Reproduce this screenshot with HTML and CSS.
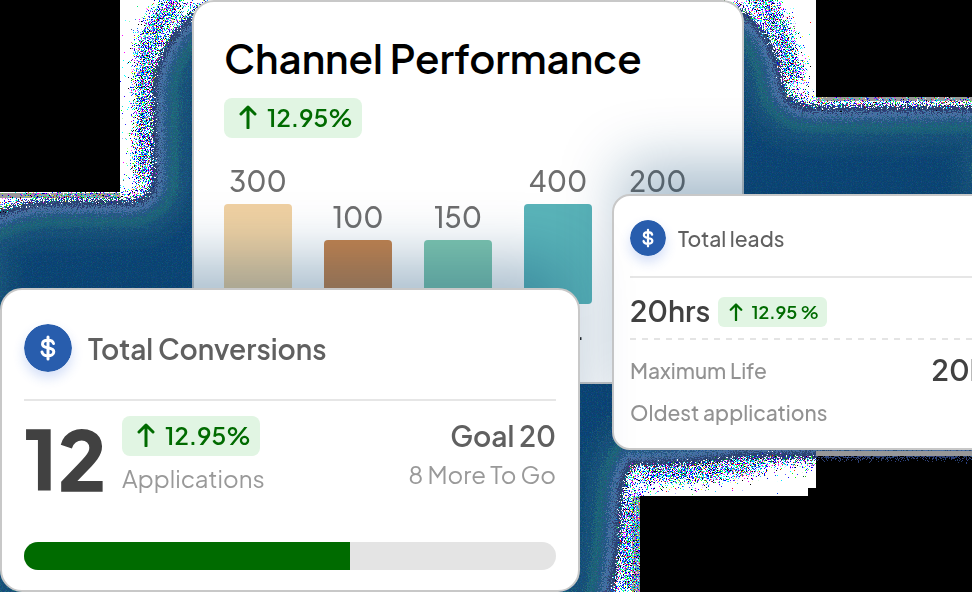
FILE: index.html
```html
<!DOCTYPE html>
<html lang="en">
<head>
<meta charset="utf-8">
<title>Channel Performance</title>
<link rel="stylesheet" href="styles.css">
</head>
<body>
<svg class="backdrop" viewBox="0 0 972 592" preserveAspectRatio="none" aria-hidden="true">
  <defs>
    <filter id="speckle" filterUnits="userSpaceOnUse" x="-40" y="-40" width="1052" height="672" color-interpolation-filters="sRGB">
      <feGaussianBlur in="SourceAlpha" stdDeviation="9" result="soft"/>
      <feTurbulence type="fractalNoise" baseFrequency="0.93" numOctaves="2" seed="4" result="n"/>
      <feColorMatrix in="n" type="matrix" values="0 0 0 0 0  0 0 0 0 0  0 0 0 0 0  1 0 0 0 0" result="na"/>
      <feComposite in="soft" in2="na" operator="arithmetic" k1="0" k2="26" k3="60" k4="-48" result="mask"/>
      <feTurbulence type="fractalNoise" baseFrequency="0.87" numOctaves="1" seed="11"/>
      <feColorMatrix type="matrix" values="14 0 0 0 -7.2  0 14 0 0 -6.5  0 0 14 0 -5.6  0 0 0 0 1"/>
      <feComposite in2="mask" operator="in"/>
    </filter>
    <filter id="grain" filterUnits="userSpaceOnUse" x="0" y="0" width="972" height="592" color-interpolation-filters="sRGB">
      <feTurbulence type="fractalNoise" baseFrequency="0.8" numOctaves="2" seed="7" result="n"/>
      <feDisplacementMap in="SourceGraphic" in2="n" scale="20" xChannelSelector="R" yChannelSelector="G" result="d"/>
      <feColorMatrix in="n" type="matrix" values="1 0 0 0 -.5  0 1 0 0 -.5  0 0 1 0 -.46  0 0 0 0 1"/>
      <feComposite in2="d" operator="in" result="t"/>
      <feComposite in="d" in2="t" operator="arithmetic" k1="0" k2="1" k3=".35" k4="0"/>
    </filter>
    <path id="halo" d="M-30 230Q0 201 60 200H130Q151 198 152 180V90Q155 40 200 8H738Q776 30 784 86Q788 104 815 106H1000V458H740Q690 466 632 466Q622 480 621 520Q620 560 608 620H-30Z"/>
    <clipPath id="inside"><use href="#halo"/></clipPath>
    <clipPath id="lit"><path d="M120 0H816V97H972V110H816V488H808V496H640V592H580V400H120V220H0V192H120Z"/></clipPath>
  </defs>
  <rect width="972" height="592"/>
  <path fill="#fff" d="M120 0H816V97H972V110H816V488H808V496H640V592H580V400H120V210H0V192H120Z"/>
  <path fill="#000" opacity=".4" d="M632 496H640V592H632ZM0 193H120V198H0ZM816 97H972V101H816Z"/>
  <g clip-path="url(#lit)">
    <use href="#halo" fill="none" stroke="#000" stroke-width="18" filter="url(#speckle)"/>
    <path fill="none" stroke="#000" stroke-width="28" filter="url(#speckle)" d="M146 190V70Q148 20 185 -5M750 -10Q790 25 792 92M635 471Q710 476 775 455M630 490V600"/>
  </g>
  <g filter="url(#grain)">
    <g clip-path="url(#inside)">
      <use href="#halo" fill="#0a426f"/>
      <use href="#halo" fill="none" stroke="#0f486f" stroke-width="100"/>
      <use href="#halo" fill="none" stroke="#154e74" stroke-width="76"/>
      <use href="#halo" fill="none" stroke="#1b6074" stroke-width="54"/>
      <use href="#halo" fill="none" stroke="#235680" stroke-width="36"/>
      <use href="#halo" fill="none" stroke="#426d9c" stroke-width="24"/>
      <use href="#halo" fill="none" stroke="#29406d" stroke-width="12"/>
    </g>
  </g>
  <path fill="#999" d="M816 451H972V456H816Z"/>
</svg>

<main class="stage">
  <section class="card performance">
    <h1 class="title">Channel Performance</h1>
    <p class="badge">
      <svg class="arrow" viewBox="0 0 18 24" aria-hidden="true"><path d="M9 23V2M2 9L9 2L16 9"/></svg>12.95%
    </p>
    <div class="chart">
      <div class="column"><span>300</span><i class="bar tall sand"></i></div>
      <div class="column"><span>100</span><i class="bar copper"></i></div>
      <div class="column"><span>150</span><i class="bar mint"></i></div>
      <div class="column"><span>400</span><i class="bar tall teal"></i></div>
      <div class="column"><span>200</span><i class="bar tall"></i></div>
    </div>
    <p class="axis">.</p>
  </section>

  <section class="card leads">
    <header class="head">
      <svg class="coin" viewBox="0 0 48 48" aria-hidden="true"><circle cx="24" cy="24" r="24"/><path d="M24 13V35M29.500 19.500C29 17.500 27 16.300 24 16.300C20.800 16.300 18.500 17.700 18.500 20.200C18.500 25.300 29.800 22.300 29.800 27.800C29.800 30.300 27.300 31.800 24 31.800C20.800 31.800 18.500 30.400 18 28"/></svg>
      <h2>Total leads</h2>
    </header>
    <div class="hours">
      <strong>20hrs</strong>
      <p class="badge small">
        <svg class="arrow" viewBox="0 0 18 24" aria-hidden="true"><path d="M9 23V2M2 9L9 2L16 9"/></svg>12.95 %
      </p>
    </div>
    <svg class="dashes" aria-hidden="true"><line x1="0" y1="1" x2="100%" y2="1"/></svg>
    <dl class="facts">
      <div><dt>Maximum Life</dt><dd>20hrs</dd></div>
      <div><dt>Oldest applications</dt></div>
    </dl>
  </section>

  <section class="card conversions">
    <header class="head">
      <svg class="coin" viewBox="0 0 48 48" aria-hidden="true"><circle cx="24" cy="24" r="24"/><path d="M24 13V35M29.500 19.500C29 17.500 27 16.300 24 16.300C20.800 16.300 18.500 17.700 18.500 20.200C18.500 25.300 29.800 22.300 29.800 27.800C29.800 30.300 27.300 31.800 24 31.800C20.800 31.800 18.500 30.400 18 28"/></svg>
      <h2>Total Conversions</h2>
    </header>
    <div class="summary">
      <strong class="count">12</strong>
      <div class="applications">
        <p class="badge">
          <svg class="arrow" viewBox="0 0 18 24" aria-hidden="true"><path d="M9 23V2M2 9L9 2L16 9"/></svg>12.95%
        </p>
        <p class="note">Applications</p>
      </div>
      <div class="goal">
        <p class="target">Goal 20</p>
        <p class="note">8 More To Go</p>
      </div>
    </div>
    <div class="track"><div class="fill"></div></div>
  </section>
</main>
</body>
</html>
```
FILE: styles.css
```css
* { box-sizing: border-box; margin: 0; padding: 0; }

body {
  min-height: 100vh;
  overflow: hidden;
  background: #000;
  color: #414141;
  font-family: "Plus Jakarta Sans", Figtree, Inter, sans-serif;
  font-weight: 500;
}

.backdrop { position: fixed; inset: 0; width: 100%; height: 100%; }

/* The three cards share cells of one grid, so that they overlap. */
.stage {
  position: relative;
  display: grid;
  grid-template-columns: 192px 388px 32px 132px 1fr;
  grid-template-rows: 194px 94px 96px auto;
  align-items: start;
}

.card { background: #fff; border: 2px solid #c8c8c8; border-radius: 22px; }

.performance {
  grid-area: 1 / 2 / 4 / 5;
  align-self: stretch;
  padding: 32px 30px 0;
}

.title { color: #000; font-size: 40px; line-height: 48px; font-weight: 600; white-space: nowrap; }

.badge {
  display: flex;
  align-items: center;
  gap: 10px;
  width: max-content;
  height: 40px;
  padding: 0 9px 2px 15px;
  border-radius: 8px;
  background: #e1f5e3;
  color: #006b00;
  font-size: 24px;
  font-weight: 600;
  line-height: 30px;
  white-space: nowrap;
}
.arrow { width: 18px; height: 24px; fill: none; stroke: #006b00; stroke-width: 3; stroke-linecap: round; stroke-linejoin: round; }
.title + .badge { margin-top: 16px; }

.chart { display: flex; align-items: flex-end; gap: 32px; margin-top: 26px; }
.column { display: flex; flex-direction: column; align-items: center; gap: 6px; width: 68px; }
.column span { color: #6e6e6e; font-size: 28px; line-height: 34px; }
.bar { width: 100%; height: 64px; border-radius: 4px; }
.tall { height: 100px; }
.sand { background: #f0d1a2; }
.copper { background: #c7834c; }
.mint { background: #7fc7b0; }
.teal { background: #5ab4b9; }
.axis { width: 360px; margin-top: 10px; color: #222; font-size: 24px; line-height: 32px; text-align: right; }

.leads {
  grid-area: 2 / 4 / 5 / 6;
  margin-right: -58px;
  padding: 24px 16px 14px;
  border-radius: 18px;
  box-shadow: 0 -40px 60px -10px rgba(10, 66, 112, .34);
}
.conversions {
  grid-area: 3 / 1 / 5 / 3;
  padding: 34px 22px 20px;
  box-shadow: 0 -40px 60px -10px rgba(10, 66, 112, .34);
}

.head { display: flex; align-items: center; gap: 16px; border-bottom: 2px solid #e6e6e6; }
.conversions .head { padding-bottom: 27px; }
.leads .head { gap: 12px; padding-bottom: 20px; }
h2 { padding-top: 2px; color: #606060; font-size: 28px; line-height: 32px; font-weight: 600; }
.leads h2 { font-size: 21px; font-weight: 500; }

.coin { flex: none; width: 48px; height: 48px; border-radius: 50%; fill: #285dad; box-shadow: 0 6px 12px rgba(40, 93, 220, .2); }
.coin path { fill: none; stroke: #fff; stroke-width: 3; stroke-linecap: round; }
.leads .coin { width: 36px; height: 36px; }

.hours { display: flex; align-items: center; gap: 8px; height: 60px; padding-top: 8px; }
.hours strong, dd { padding-bottom: 4px; color: #414141; font-size: 29px; line-height: 36px; font-weight: 600; }
.small { gap: 8px; height: 30px; padding: 0 8px 0 11px; border-radius: 6px; font-size: 18px; }
.small .arrow { width: 14px; height: 18px; }

.dashes { display: block; width: 100%; height: 2px; }
.dashes line { stroke: #e4e4e4; stroke-width: 2; stroke-dasharray: 6 6; }

.facts { padding-top: 10px; }
.facts div { display: flex; justify-content: space-between; align-items: center; height: 42px; }
dt { color: #929292; font-size: 21px; line-height: 28px; }

.summary { display: flex; align-items: flex-start; padding-top: 15px; }
.count { width: 98px; color: #414141; font-size: 82px; line-height: 84px; font-weight: 800; }
.note { color: #999; font-size: 24px; line-height: 32px; font-weight: 400; white-space: nowrap; }
.applications .note { margin-top: 6px; }
.goal { margin-left: auto; padding-top: 3px; text-align: right; }
.target { color: #606060; font-size: 28px; line-height: 34px; font-weight: 600; }
.goal .note { margin-top: 5px; }

.track { height: 28px; margin-top: 42px; border-radius: 14px; overflow: hidden; background: #e4e4e4; }
.fill { width: 61.3%; height: 100%; background: #006b00; }
```
